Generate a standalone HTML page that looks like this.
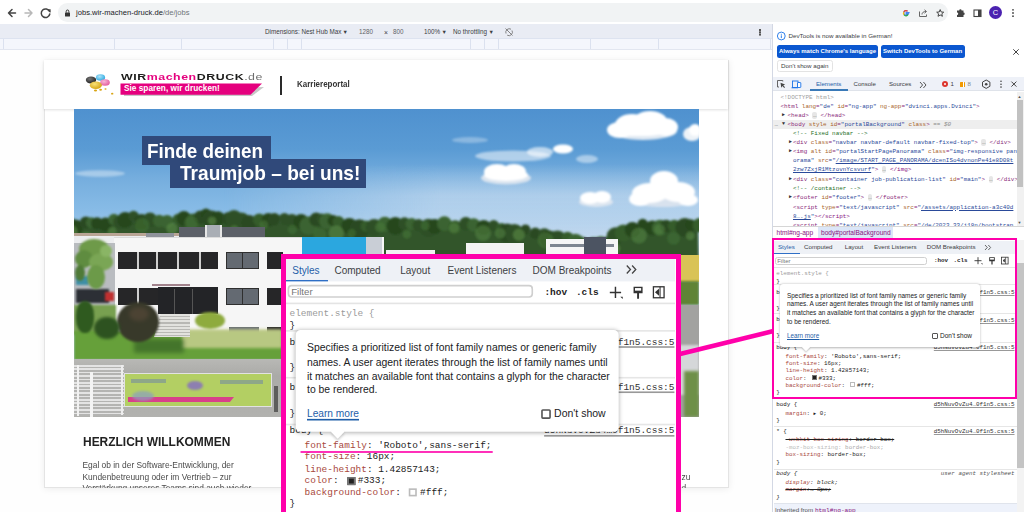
<!DOCTYPE html>
<html><head><meta charset="utf-8">
<style>
*{box-sizing:border-box;margin:0;padding:0}
html,body{width:1024px;height:512px;overflow:hidden;background:#fff;font-family:"Liberation Sans",sans-serif;position:relative}
.a{position:absolute}
.mono{font-family:"Liberation Mono",monospace}
.nw{white-space:nowrap}
#top{left:0;top:0;width:1024px;height:24px;background:#fff}
#pill{left:58px;top:3px;width:890px;height:18.5px;border-radius:9.25px;background:#f1f3f4}
#devtb{left:0;top:24px;width:772px;height:15px;background:#e9ecf4}
#ruler{left:0;top:38px;width:772px;height:12px;background:#f4f6fc;border-top:1px solid #dde3f0;border-bottom:1px solid #e2e6f0}
#ruler i{position:absolute;top:0;width:1px;height:10px;background:#dbe1ef}
#vp{left:0;top:50px;width:772px;height:462px;background:#fefefe}
#card{left:43.5px;top:59.5px;width:685px;height:428px;background:#fff;border:1px solid #e4e4e4;box-shadow:0 1px 7px rgba(0,0,0,.07);overflow:hidden}
#dt{left:772px;top:24px;width:252px;height:488px;background:#fff;border-left:1px solid #d3d8e4;overflow:hidden}
.sp{position:absolute;left:0;top:0;width:243px;height:282px;background:#fff}
.pn{color:#a8483c}
.dtxt{color:#3c4043;font-size:6.2px;line-height:8px}
</style></head>
<body>
<!-- ===== browser top bar ===== -->
<div id="top" class="a"></div>
<svg class="a" style="left:0;top:0" width="60" height="24" viewBox="0 0 60 24">
 <g fill="none" stroke-width="1.5" stroke-linecap="round" stroke-linejoin="round">
  <path d="M15.5 13H8.5M12 9.5L8.5 13L12 16.5" stroke="#444"/>
  <path d="M25 13H32M28.5 9.5L32 13L28.5 16.5" stroke="#b8b8b8"/>
  <path d="M49.5 11.5A4.3 4.3 0 1 0 49.8 14" stroke="#444"/>
 </g>
 <path d="M47 9.2L50.6 9.2L50.6 12.8Z" fill="#444"/>
</svg>
<div id="pill" class="a"></div>
<svg class="a" style="left:63px;top:8px" width="9" height="10" viewBox="0 0 9 10">
 <rect x="2" y="4.5" width="5" height="4" rx=".6" fill="#333"/>
 <path d="M3.2 4.6V3.3A1.3 1.3 0 0 1 5.8 3.3V4.6" fill="none" stroke="#333" stroke-width="1"/>
</svg>
<div class="a nw" style="left:76px;top:7.5px;font-size:7.6px;line-height:10px;color:#202124">jobs.wir-machen-druck.de<span style="color:#6f7378">/de/jobs</span></div>
<!-- right icons -->
<svg class="a" style="left:900px;top:6px" width="124" height="14" viewBox="0 0 124 14">
 <!-- G -->
 <path d="M9.6 6.6H6.2V8H8.1A2.3 2.3 0 1 1 7.5 5.2" fill="none" stroke="#4285f4" stroke-width="1.3"/>
 <path d="M7.5 5.2A2.3 2.3 0 0 0 3.9 6.1" fill="none" stroke="#ea4335" stroke-width="1.3"/>
 <path d="M3.9 6.1A2.3 2.3 0 0 0 4.1 8.9" fill="none" stroke="#fbbc05" stroke-width="1.3"/>
 <path d="M4.1 8.9A2.3 2.3 0 0 0 8.1 8.2" fill="none" stroke="#34a853" stroke-width="1.3"/>
 <!-- share -->
 <path d="M19.5 5.5V10.5H26.5V8.5M22 8.5C22 6.5 23.5 5.5 26 5.5M24.5 3.8L26.5 5.5L24.5 7.2" fill="none" stroke="#666" stroke-width="1"/>
 <!-- star -->
 <path d="M40.2 3.6L41.2 6L43.7 6.2L41.8 7.8L42.4 10.3L40.2 9L38 10.3L38.6 7.8L36.7 6.2L39.2 6Z" fill="none" stroke="#444" stroke-width="1" stroke-linejoin="round"/>
 <!-- puzzle -->
 <path d="M57 4.5H59.2A1.2 1.2 0 0 1 61.6 4.5H63.5V6.6A1.2 1.2 0 0 1 63.5 9V11H57V9A1.2 1.2 0 0 0 57 6.6Z" fill="#444"/>
 <!-- sidebar -->
 <rect x="74" y="4" width="7" height="6.5" fill="none" stroke="#444" stroke-width="1.1"/>
 <rect x="78" y="4" width="3" height="6.5" fill="#444"/>
 <!-- kebab -->
 <circle cx="113" cy="3.8" r=".9" fill="#444"/><circle cx="113" cy="7" r=".9" fill="#444"/><circle cx="113" cy="10.2" r=".9" fill="#444"/>
</svg>
<div class="a" style="left:989px;top:6px;width:13px;height:13px;border-radius:50%;background:#4b22b0;color:#fff;font-size:7.5px;line-height:13px;text-align:center">C</div>

<!-- ===== device toolbar ===== -->
<div id="devtb" class="a"></div>
<div class="a nw" style="left:265px;top:28px;font-size:6.3px;line-height:8px;color:#3c4043">Dimensions: Nest Hub Max<span style="font-size:5.5px;margin-left:1.2px">▼</span></div>
<div class="a nw" style="left:359px;top:28px;font-size:6.3px;line-height:8px;color:#5f6368">1280</div>
<div class="a nw" style="left:384px;top:28.5px;font-size:6.8px;line-height:8px;color:#3c4043">×</div>
<div class="a nw" style="left:393px;top:28px;font-size:6.3px;line-height:8px;color:#5f6368">800</div>
<div class="a nw" style="left:424px;top:28px;font-size:6.3px;line-height:8px;color:#3c4043">100%<span style="font-size:5.5px;margin-left:1.5px">▼</span></div>
<div class="a nw" style="left:453px;top:28px;font-size:6.3px;line-height:8px;color:#3c4043">No throttling<span style="font-size:5.5px;margin-left:1.5px">▼</span></div>
<svg class="a" style="left:504px;top:27px" width="10" height="10" viewBox="0 0 10 10"><path d="M2 6.5A3.5 3.5 0 0 1 7 2.2M8 3.5A3.5 3.5 0 0 1 3.2 8.2M1.5 1.5L8.5 8.5" fill="none" stroke="#777" stroke-width=".9"/></svg>
<div class="a" style="left:759px;top:29px;width:1.6px;height:1.6px;background:#555;box-shadow:0 2.3px 0 #555,0 4.6px 0 #555"></div>
<div id="ruler" class="a"><i style="left:2.5px"></i><i style="left:114px"></i><i style="left:181px"></i><i style="left:273px"></i><i style="left:287px"></i><i style="left:301px"></i><i style="left:470px"></i><i style="left:484px"></i><i style="left:498px"></i><i style="left:590px"></i><i style="left:658px"></i><i style="left:769.5px"></i></div>

<!-- ===== viewport ===== -->
<div id="vp" class="a"></div>
<div id="card" class="a"></div>
<!-- header -->
<div class="a" style="left:44px;top:60px;width:684px;height:48.5px;background:#fff;box-shadow:0 1px 2.5px rgba(0,0,0,.13)"></div>
<svg class="a" style="left:84px;top:72px" width="34" height="25" viewBox="0 0 34 25">
 <defs>
  <radialGradient id="gk" cx=".4" cy=".35" r=".7"><stop offset="0" stop-color="#777"/><stop offset="1" stop-color="#1e1e1e"/></radialGradient>
  <radialGradient id="gc" cx=".4" cy=".35" r=".7"><stop offset="0" stop-color="#aee4fa"/><stop offset="1" stop-color="#2aa8e0"/></radialGradient>
  <radialGradient id="gm" cx=".4" cy=".35" r=".7"><stop offset="0" stop-color="#f7b6d6"/><stop offset="1" stop-color="#e2579a"/></radialGradient>
  <radialGradient id="gy" cx=".4" cy=".35" r=".7"><stop offset="0" stop-color="#f8e27a"/><stop offset="1" stop-color="#d3a10c"/></radialGradient>
 </defs>
 <ellipse cx="16.5" cy="5.5" rx="4.6" ry="3.2" fill="url(#gc)"/>
 <ellipse cx="7" cy="8" rx="5.2" ry="3.4" fill="url(#gk)"/>
 <ellipse cx="21" cy="10.5" rx="4.8" ry="3.3" fill="url(#gm)"/>
 <ellipse cx="11.8" cy="13.2" rx="6" ry="3.8" fill="url(#gy)"/>
 <ellipse cx="11.5" cy="18.5" rx="1.6" ry="1.1" fill="#d9a515"/>
 <ellipse cx="16.6" cy="17.7" rx="1.4" ry="1" fill="#d9a515"/>
 <ellipse cx="21.5" cy="17" rx="1.1" ry=".8" fill="#d9a515"/>
 <ellipse cx="28.2" cy="21.7" rx="1.2" ry=".9" fill="#d9a515"/>
</svg>
<div class="a nw" style="left:120.5px;top:71.5px;font-size:9.9px;line-height:10px;font-weight:bold;letter-spacing:.45px;color:#1d1d1b;transform:scaleX(1.25);transform-origin:0 0">WIR<span style="color:#e5007e">machen</span>DRUCK<span style="color:#6e6e6e;font-weight:normal">.de</span></div>
<svg class="a" style="left:120px;top:82.5px" width="146" height="14" viewBox="0 0 146 14"><path d="M4 6L144 4L132 13L4 13Z" fill="#c8c8c8"/><path d="M0.5 .5H142L130.5 11.8H0.5Z" fill="#e5007e"/></svg>
<div class="a nw" style="left:124px;top:83.5px;font-size:8.2px;line-height:10px;font-weight:bold;color:#fff;letter-spacing:.05px">Sie sparen, wir drucken!</div>
<div class="a" style="left:280px;top:76px;width:1.6px;height:18.5px;background:#2a2a2a"></div>
<div class="a nw" style="left:297px;top:79px;font-size:9.2px;line-height:11px;font-weight:bold;color:#333;transform:scaleX(.867);transform-origin:0 0">Karriereportal</div>

<!-- hero photo -->
<div class="a" style="left:74px;top:109px;width:624.5px;height:308px;overflow:hidden;background:linear-gradient(180deg,rgb(79,145,207) 0px,rgb(90,155,212) 40px,rgb(118,174,222) 70px,rgb(135,187,230) 100px,rgb(150,195,233) 115px,rgb(180,206,234) 135px)">
 
 <div class="a" style="left:150px;top:55px;width:480px;height:95px;background:linear-gradient(180deg,rgba(205,222,240,0) 0%,rgba(205,222,240,.6) 33%,rgba(205,222,240,.65) 100%);-webkit-mask-image:linear-gradient(90deg,transparent,#000 45%)"></div>
 <!-- clouds -->
 <svg class="a" style="left:0;top:0" width="625" height="120" viewBox="0 0 625 120"><defs><filter id="cb" x="-20%" y="-40%" width="140%" height="180%"><feGaussianBlur stdDeviation="1.3"/></filter></defs><g filter="url(#cb)"><ellipse cx="569.0" cy="22.0" rx="34.0" ry="9.0" fill="#dfe8f2" opacity="1.00"/><ellipse cx="558.0" cy="16.0" rx="17.0" ry="11.0" fill="#fff" opacity="1.00"/><ellipse cx="576.0" cy="12.0" rx="17.0" ry="10.0" fill="#fff" opacity="1.00"/><ellipse cx="592.0" cy="18.0" rx="12.0" ry="9.0" fill="#fff" opacity="1.00"/><ellipse cx="546.0" cy="21.0" rx="13.0" ry="8.0" fill="#fff" opacity="1.00"/><ellipse cx="569.0" cy="19.0" rx="30.0" ry="8.0" fill="#fff" opacity="1.00"/><ellipse cx="618.0" cy="25.0" rx="9.0" ry="7.0" fill="#eef3f8" opacity="1.00"/><ellipse cx="621.0" cy="21.0" rx="6.0" ry="6.0" fill="#fff" opacity="1.00"/><ellipse cx="439.0" cy="47.0" rx="38.0" ry="5.5" fill="#f4f7fb" opacity="0.55"/><ellipse cx="466.0" cy="43.0" rx="13.0" ry="5.0" fill="#fff" opacity="0.60"/><ellipse cx="489.0" cy="40.0" rx="10.0" ry="4.5" fill="#fff" opacity="1.00"/><ellipse cx="432.0" cy="69.0" rx="25.0" ry="6.5" fill="#dae4ef" opacity="1.00"/><ellipse cx="423.0" cy="63.0" rx="13.0" ry="8.0" fill="#fff" opacity="1.00"/><ellipse cx="440.0" cy="63.0" rx="12.0" ry="8.0" fill="#fff" opacity="1.00"/><ellipse cx="432.0" cy="66.0" rx="22.0" ry="6.0" fill="#fff" opacity="1.00"/><ellipse cx="589.0" cy="90.0" rx="33.0" ry="8.0" fill="#d8e2ee" opacity="1.00"/><ellipse cx="590.0" cy="72.0" rx="14.0" ry="10.0" fill="#fff" opacity="1.00"/><ellipse cx="576.0" cy="84.0" rx="18.0" ry="10.0" fill="#fff" opacity="1.00"/><ellipse cx="604.0" cy="83.0" rx="17.0" ry="10.0" fill="#fff" opacity="1.00"/><ellipse cx="566.0" cy="90.0" rx="11.0" ry="7.0" fill="#fff" opacity="1.00"/><ellipse cx="614.0" cy="91.0" rx="10.0" ry="6.0" fill="#fff" opacity="1.00"/><ellipse cx="522.0" cy="93.0" rx="17.0" ry="5.0" fill="#dde6f0" opacity="1.00"/><ellipse cx="516.0" cy="89.0" rx="10.0" ry="6.0" fill="#fff" opacity="1.00"/><ellipse cx="528.0" cy="88.0" rx="9.0" ry="6.0" fill="#fff" opacity="1.00"/><ellipse cx="513.0" cy="50.0" rx="11.0" ry="4.0" fill="#fff" opacity="0.45"/><ellipse cx="26.0" cy="64.5" rx="25.0" ry="3.2" fill="#fff" opacity="0.38"/><ellipse cx="396.0" cy="31.0" rx="18.0" ry="3.0" fill="#fff" opacity="0.30"/></g></svg>
 
 <!-- tree line -->
<svg class="a" style="left:0;top:0" width="625" height="160" viewBox="0 0 625 160"><defs><filter id="bl" x="-5%" y="-20%" width="110%" height="140%"><feGaussianBlur stdDeviation="1"/></filter></defs><g filter="url(#bl)"><polygon points="0.0,120.0 12.0,118.0 36.0,114.0 66.0,112.0 96.0,115.0 134.0,109.0 166.0,112.0 196.0,114.0 226.0,113.0 257.0,115.0 286.0,119.0 309.0,118.0 346.0,117.0 405.0,118.0 426.0,121.0 456.0,124.0 476.0,129.0 501.0,134.0 531.0,136.0 548.0,124.0 566.0,120.0 596.0,119.0 624.0,119.0 625,160 0,160" fill="#30552a"/><circle cx="-4.0" cy="115.4" r="6.6" fill="#28461f"/><circle cx="1.4" cy="118.3" r="7.7" fill="#28461f"/><circle cx="11.9" cy="113.5" r="6.1" fill="#2b4a23"/><circle cx="17.3" cy="113.7" r="5.5" fill="#3a6430"/><circle cx="23.1" cy="114.4" r="6.1" fill="#28461f"/><circle cx="31.5" cy="115.6" r="7.0" fill="#28461f"/><circle cx="39.9" cy="110.5" r="5.7" fill="#3a6430"/><circle cx="45.6" cy="113.0" r="6.5" fill="#2e5027"/><circle cx="51.2" cy="110.8" r="7.9" fill="#28461f"/><circle cx="59.5" cy="107.0" r="5.3" fill="#2e5027"/><circle cx="67.4" cy="112.7" r="7.7" fill="#2b4a23"/><circle cx="76.0" cy="110.8" r="7.3" fill="#2e5027"/><circle cx="85.2" cy="112.0" r="6.2" fill="#3a6430"/><circle cx="93.1" cy="112.7" r="6.7" fill="#3a6430"/><circle cx="104.0" cy="110.4" r="5.6" fill="#355c2c"/><circle cx="109.9" cy="109.4" r="7.4" fill="#28461f"/><circle cx="119.5" cy="112.5" r="7.9" fill="#355c2c"/><circle cx="126.5" cy="108.4" r="6.8" fill="#2b4a23"/><circle cx="132.0" cy="105.1" r="5.5" fill="#28461f"/><circle cx="137.3" cy="110.1" r="8.5" fill="#2b4a23"/><circle cx="144.0" cy="109.2" r="6.9" fill="#28461f"/><circle cx="154.7" cy="109.8" r="6.8" fill="#2b4a23"/><circle cx="160.0" cy="109.9" r="8.8" fill="#2e5027"/><circle cx="167.4" cy="113.2" r="9.6" fill="#2e5027"/><circle cx="175.1" cy="113.8" r="7.7" fill="#2b4a23"/><circle cx="185.3" cy="110.8" r="6.4" fill="#355c2c"/><circle cx="194.4" cy="110.9" r="6.9" fill="#28461f"/><circle cx="200.4" cy="110.2" r="6.2" fill="#2b4a23"/><circle cx="210.4" cy="109.8" r="5.9" fill="#2e5027"/><circle cx="217.9" cy="111.9" r="6.8" fill="#2e5027"/><circle cx="227.1" cy="112.7" r="7.6" fill="#28461f"/><circle cx="234.8" cy="116.7" r="9.4" fill="#3a6430"/><circle cx="242.2" cy="110.6" r="7.0" fill="#2b4a23"/><circle cx="247.6" cy="109.8" r="5.3" fill="#2e5027"/><circle cx="253.2" cy="112.3" r="8.0" fill="#3a6430"/><circle cx="259.1" cy="111.6" r="5.5" fill="#28461f"/><circle cx="264.5" cy="113.0" r="6.0" fill="#355c2c"/><circle cx="275.3" cy="116.9" r="8.0" fill="#28461f"/><circle cx="285.4" cy="120.2" r="10.0" fill="#2b4a23"/><circle cx="292.2" cy="117.2" r="5.7" fill="#355c2c"/><circle cx="300.1" cy="118.4" r="8.5" fill="#2e5027"/><circle cx="310.8" cy="115.3" r="7.6" fill="#3a6430"/><circle cx="321.3" cy="116.9" r="8.8" fill="#28461f"/><circle cx="330.5" cy="114.6" r="6.3" fill="#2e5027"/><circle cx="337.6" cy="115.0" r="6.1" fill="#3a6430"/><circle cx="344.6" cy="116.2" r="6.1" fill="#2e5027"/><circle cx="354.4" cy="118.9" r="9.1" fill="#2e5027"/><circle cx="360.6" cy="117.4" r="7.5" fill="#28461f"/><circle cx="370.4" cy="114.7" r="7.4" fill="#3a6430"/><circle cx="381.1" cy="118.5" r="7.2" fill="#355c2c"/><circle cx="391.8" cy="114.7" r="6.8" fill="#2e5027"/><circle cx="399.7" cy="116.0" r="6.7" fill="#3a6430"/><circle cx="409.7" cy="118.3" r="7.4" fill="#28461f"/><circle cx="419.7" cy="116.6" r="5.6" fill="#2e5027"/><circle cx="427.6" cy="120.0" r="5.9" fill="#355c2c"/><circle cx="433.1" cy="124.1" r="9.7" fill="#2b4a23"/><circle cx="440.5" cy="124.8" r="9.7" fill="#2e5027"/><circle cx="451.5" cy="120.6" r="5.1" fill="#2b4a23"/><circle cx="461.3" cy="124.2" r="5.7" fill="#2b4a23"/><circle cx="470.3" cy="126.1" r="6.8" fill="#2e5027"/><circle cx="475.4" cy="130.5" r="9.0" fill="#28461f"/><circle cx="483.5" cy="131.3" r="9.7" fill="#2e5027"/><circle cx="493.5" cy="128.8" r="6.1" fill="#355c2c"/><circle cx="501.5" cy="133.5" r="8.8" fill="#3a6430"/><circle cx="509.0" cy="133.7" r="5.7" fill="#355c2c"/><circle cx="519.4" cy="136.6" r="8.3" fill="#3a6430"/><circle cx="526.9" cy="136.8" r="9.6" fill="#3a6430"/><circle cx="532.8" cy="135.6" r="7.6" fill="#2e5027"/><circle cx="541.5" cy="127.2" r="8.9" fill="#2e5027"/><circle cx="549.3" cy="124.1" r="8.6" fill="#355c2c"/><circle cx="558.4" cy="120.7" r="7.7" fill="#28461f"/><circle cx="568.7" cy="115.1" r="5.3" fill="#28461f"/><circle cx="578.4" cy="118.9" r="7.5" fill="#28461f"/><circle cx="586.0" cy="118.9" r="8.1" fill="#3a6430"/><circle cx="592.2" cy="117.1" r="6.4" fill="#2b4a23"/><circle cx="600.3" cy="116.9" r="6.2" fill="#355c2c"/><circle cx="610.8" cy="118.5" r="9.5" fill="#2b4a23"/><circle cx="616.6" cy="115.8" r="5.6" fill="#28461f"/><circle cx="625.6" cy="116.2" r="7.1" fill="#355c2c"/><circle cx="-4.0" cy="123.1" r="7.6" fill="#5f9048" opacity=".55"/><circle cx="12.3" cy="130.2" r="7.5" fill="#558644" opacity=".55"/><circle cx="38.2" cy="122.1" r="4.4" fill="#558644" opacity=".55"/><circle cx="68.1" cy="116.2" r="7.3" fill="#447234" opacity=".55"/><circle cx="98.0" cy="119.5" r="5.6" fill="#5f9048" opacity=".55"/><circle cx="117.1" cy="113.8" r="6.9" fill="#447234" opacity=".55"/><circle cx="138.1" cy="111.8" r="4.1" fill="#5f9048" opacity=".55"/><circle cx="160.3" cy="120.6" r="4.3" fill="#558644" opacity=".55"/><circle cx="189.9" cy="115.7" r="4.4" fill="#4a7a38" opacity=".55"/><circle cx="218.4" cy="120.5" r="4.7" fill="#447234" opacity=".55"/><circle cx="246.0" cy="125.5" r="6.7" fill="#447234" opacity=".55"/><circle cx="262.3" cy="124.1" r="7.7" fill="#5f9048" opacity=".55"/><circle cx="277.8" cy="124.0" r="4.2" fill="#447234" opacity=".55"/><circle cx="306.1" cy="118.4" r="5.1" fill="#4a7a38" opacity=".55"/><circle cx="332.9" cy="125.3" r="4.3" fill="#4a7a38" opacity=".55"/><circle cx="351.2" cy="116.7" r="4.5" fill="#447234" opacity=".55"/><circle cx="380.0" cy="118.9" r="5.1" fill="#558644" opacity=".55"/><circle cx="409.0" cy="124.1" r="7.9" fill="#558644" opacity=".55"/><circle cx="426.2" cy="124.3" r="5.2" fill="#558644" opacity=".55"/><circle cx="444.9" cy="125.7" r="6.0" fill="#5f9048" opacity=".55"/><circle cx="471.7" cy="131.3" r="8.0" fill="#4a7a38" opacity=".55"/><circle cx="497.4" cy="136.4" r="6.2" fill="#447234" opacity=".55"/><circle cx="515.4" cy="142.3" r="5.8" fill="#447234" opacity=".55"/><circle cx="539.9" cy="139.8" r="6.2" fill="#5f9048" opacity=".55"/><circle cx="564.9" cy="126.6" r="7.9" fill="#558644" opacity=".55"/><circle cx="585.4" cy="120.3" r="5.4" fill="#558644" opacity=".55"/><circle cx="599.6" cy="129.3" r="6.5" fill="#447234" opacity=".55"/><circle cx="616.2" cy="126.8" r="4.3" fill="#5f9048" opacity=".55"/></g></svg>
 <!-- buildings top -->
 <div class="a" style="left:0;top:124px;width:111px;height:12px;background:#ecedef"></div>
 <div class="a" style="left:0;top:123.5px;width:111px;height:3px;background:#b9a595"></div>
 <div class="a" style="left:72px;top:124px;width:28px;height:10px;background:#8f939b"></div>
 <div class="a" style="left:104.5px;top:117.5px;width:86px;height:11px;background:#5c6068"></div>
 <div class="a" style="left:131px;top:116px;width:17px;height:12.5px;background:#a9aeb5;border-left:2px solid #e6e6e6;border-right:2px solid #e6e6e6"></div>
 <!-- main white building -->
 <div class="a" style="left:40px;top:127.5px;width:270px;height:96.5px;background:#f6f6f6"></div>
 <div class="a" style="left:228px;top:128px;width:64px;height:17px;background:#2ba7df"></div>
 <div class="a" style="left:292px;top:128px;width:16px;height:17px;background:#c9ced6"></div>
 <div class="a" style="left:40px;top:127.5px;width:188px;height:1.5px;background:#dcdcdc"></div>
 <div class="a" style="left:44px;top:142.6px;width:100px;height:17.2px;background:#262628"></div>
 <div class="a" style="left:62.6px;top:142.6px;width:2.2px;height:17.2px;background:#cfcfcf"></div>
 <div class="a" style="left:82px;top:142.6px;width:2.2px;height:17.2px;background:#cfcfcf"></div>
 <div class="a" style="left:102.6px;top:142.6px;width:2.2px;height:17.2px;background:#cfcfcf"></div>
 <div class="a" style="left:125px;top:142.6px;width:2.2px;height:17.2px;background:#cfcfcf"></div>
 <div class="a" style="left:151.6px;top:142.6px;width:33.4px;height:17.2px;background:#646a72;border:1.6px solid #2f2f2f"></div>
 <div class="a" style="left:167.5px;top:142.6px;width:1.5px;height:17.2px;background:#2f2f2f"></div>
 <div class="a" style="left:192.8px;top:142.6px;width:16px;height:17.2px;background:#262628"></div>
 <div class="a" style="left:44px;top:179px;width:40px;height:17.3px;background:#262628"></div>
 <div class="a" style="left:62.6px;top:179px;width:2.2px;height:17.3px;background:#cfcfcf"></div>
 <div class="a" style="left:84px;top:178px;width:60.3px;height:27px;background:#232427"></div>
 <div class="a" style="left:100px;top:180px;width:1.3px;height:25px;background:#555"></div><div class="a" style="left:118px;top:180px;width:1.3px;height:25px;background:#555"></div>
 <div class="a" style="left:151.6px;top:179px;width:33.4px;height:17.3px;background:#646a72;border:1.6px solid #2f2f2f"></div>
 <div class="a" style="left:167.5px;top:179px;width:1.5px;height:17.3px;background:#2f2f2f"></div>
 <div class="a" style="left:192.8px;top:179px;width:16px;height:17.3px;background:#262628"></div>
 <div class="a" style="left:155px;top:217.8px;width:30px;height:6.2px;background:#646a72"></div>
 <div class="a" style="left:192.8px;top:217.8px;width:16px;height:6.2px;background:#262628"></div>
 <div class="a" style="left:77.6px;top:174.8px;width:38px;height:2.5px;background:#6a3848;opacity:.6"></div>
 <!-- right buildings -->
 <div class="a" style="left:311.7px;top:141px;width:49.3px;height:5px;background:#f2f2f2"></div>
 <div class="a" style="left:391.5px;top:134px;width:58px;height:12px;background:#f3f3f3"></div>
 <div class="a" style="left:472px;top:130px;width:72px;height:16px;background:#f5f5f5"></div>
 <div class="a" style="left:476px;top:134.5px;width:64px;height:3px;background:#7d8590"></div>
 <div class="a" style="left:510px;top:128px;width:21.7px;height:18px;background:#4c5462"></div>
 <!-- left parking -->
 <div class="a" style="left:0;top:134px;width:41px;height:90px;background:#b9bcc0"></div>
 <div class="a" style="left:3px;top:150px;width:30px;height:8px;background:#d4d6d8;filter:blur(1px)"></div>
 <div class="a" style="left:2px;top:167px;width:13px;height:9px;background:#3f8fa6;filter:blur(1px)"></div>
 <div class="a" style="left:2px;top:180px;width:33px;height:14px;background:#2c2f35;filter:blur(1.1px)"></div>
 <div class="a" style="left:31px;top:183px;width:9px;height:9px;background:#c03030;filter:blur(.8px)"></div>
 <svg class="a" style="left:0;top:120px" width="42" height="80" viewBox="0 0 42 80"><defs><filter id="tb2"><feGaussianBlur stdDeviation="1.1"/></filter></defs><g filter="url(#tb2)">
  <ellipse cx="20" cy="20" rx="15" ry="10" fill="#6e9a4a"/><ellipse cx="10" cy="30" rx="9" ry="9" fill="#5f8c40"/><ellipse cx="27" cy="33" rx="12" ry="9" fill="#7aa655"/>
  <ellipse cx="22" cy="48" rx="9" ry="12" fill="#6c9a48"/><ellipse cx="32" cy="22" rx="6" ry="6" fill="#8ab565"/><ellipse cx="6" cy="44" rx="5" ry="8" fill="#4f7a38"/>
 </g></svg>
 <div class="a" style="left:0;top:196px;width:42px;height:30px;background:#78a050;filter:blur(1px)"></div>
 <!-- grass, bushes -->
 <div class="a" style="left:0;top:222px;width:210px;height:29px;background:#66a03a;filter:blur(.8px)"></div>
 <div class="a" style="left:108px;top:220px;width:100px;height:19px;background:#c7cf8f;filter:blur(1.5px);opacity:.85"></div>
 <div class="a" style="left:60px;top:230px;width:50px;height:14px;background:#2f5a22;filter:blur(2px);opacity:.6"></div>
 <div class="a" style="left:80px;top:205px;width:36px;height:23px;background:repeating-linear-gradient(180deg,#e2e2de 0 2px,#b8b8b4 2px 3.2px);clip-path:polygon(18% 0,100% 0,100% 100%,0 100%)"></div>
 <div class="a" style="left:2px;top:192px;width:18px;height:32px;border-radius:45%;background:#2f5a1f;filter:blur(1px)"></div>
 <div class="a" style="left:43px;top:193px;width:42px;height:40px;border-radius:50%;background:#38392a;filter:blur(1.2px)"></div><div class="a" style="left:55px;top:198px;width:20px;height:14px;border-radius:50%;background:#5a4a3a;filter:blur(2px);opacity:.6"></div>
 <div class="a" style="left:121px;top:203px;width:30px;height:17px;border-radius:50%;background:#8eab3e;filter:blur(1px)"></div>
 <div class="a" style="left:20px;top:208px;width:26px;height:22px;border-radius:50%;background:#2d5220;filter:blur(1.5px)"></div>
 <!-- road, fence, banner -->
 <div class="a" style="left:0;top:250px;width:210px;height:58px;background:linear-gradient(180deg,#b8b8b5,#aaaaa7 30%,#b2b2af)"></div>
 <div class="a" style="left:0;top:255.5px;width:50px;height:51px;background:repeating-linear-gradient(180deg,#e6e6e6 0 1.6px,#b4b4b2 1.6px 3.4px);opacity:.95"></div>
 <div class="a" style="left:3px;top:255.5px;width:1.8px;height:51px;background:#f2f2f2"></div>
 <div class="a" style="left:16px;top:263px;width:2.6px;height:45px;background:#f4f4f4"></div>
 <div class="a" style="left:47px;top:256px;width:2.2px;height:50px;background:#ededed"></div>
 <div class="a" style="left:50px;top:264px;width:147.5px;height:33.5px;background:#b3cf63;border:1px solid #e2e2e2"></div>
 <div class="a" style="left:53.7px;top:288px;width:106.3px;height:5.3px;background:#d8408a;clip-path:polygon(0 0,100% 0,96% 100%,0 100%)"></div>
 <div class="a" style="left:57px;top:270px;width:35px;height:4.4px;background:#6f86a8;opacity:.55"></div>
 <div class="a" style="left:146px;top:271px;width:43px;height:4.4px;background:#6f86a8;opacity:.55"></div>
 <div class="a" style="left:113px;top:272px;width:16px;height:9px;border-radius:50%;background:#8d7fb0;filter:blur(1px)"></div>
 <div class="a" style="left:58px;top:282px;width:22px;height:10px;border-radius:50%;background:#8aa0c0;filter:blur(1px);opacity:.7"></div>
 <div class="a" style="left:200px;top:277px;width:4px;height:26px;background:#3a3a3a;opacity:.7"></div>
 <!-- right strip -->
 <div class="a" style="left:600px;top:146px;width:25px;height:27px;background:#d9c356"></div>
 <div class="a" style="left:600px;top:172px;width:25px;height:24px;background:#5f8436;filter:blur(1px)"></div>
 <div class="a" style="left:600px;top:196px;width:25px;height:112px;background:#a2a2a0"></div>
 <div class="a" style="left:604px;top:236px;width:21px;height:50px;background:#d5d7d9;filter:blur(1px)"></div>
 <div class="a" style="left:610px;top:262px;width:15px;height:46px;background:#6e9048;filter:blur(1.5px)"></div>
 <!-- headline -->
 <div class="a" style="left:67.5px;top:27px;width:129.5px;height:28.5px;background:#30497a"></div>
 <div class="a" style="left:96px;top:50px;width:195.5px;height:28.7px;background:#30497a"></div>
 <div class="a nw" style="left:73px;top:30px;font-size:20.8px;line-height:24px;font-weight:bold;color:#fff;transform:scaleX(.905);transform-origin:0 0">Finde deinen</div>
 <div class="a nw" style="left:105.5px;top:52px;font-size:20.8px;line-height:24px;font-weight:bold;color:#fff;transform:scaleX(.918);transform-origin:0 0">Traumjob – bei uns!</div>
</div>
<!-- welcome text -->
<div class="a nw" style="left:82.5px;top:434px;font-size:13.5px;line-height:15px;font-weight:bold;color:#222;transform:scaleX(.885);transform-origin:0 0">HERZLICH WILLKOMMEN</div>
<div class="a" style="left:44px;top:450px;width:240px;height:37.5px;overflow:hidden">
 <div class="a nw" style="left:38.5px;top:10px;font-size:8.4px;line-height:11.6px;color:#4a4a4a">Egal ob in der Software-Entwicklung, der<br>Kundenbetreuung oder im Vertrieb – zur<br>Verstärkung unseres Teams sind auch wieder</div>
</div>
<div class="a" style="left:670px;top:450px;width:40px;height:37.5px;overflow:hidden">
 <div class="a nw" style="left:11.5px;top:10px;font-size:8.4px;line-height:11.6px;color:#4a4a4a">&nbsp;<br>zu<br>d</div>
</div>

<!-- ===== devtools ===== -->
<div id="dt" class="a"></div>
<svg class="a" style="left:776px;top:31px" width="11" height="11" viewBox="0 0 11 11"><circle cx="5.3" cy="5" r="3.9" fill="none" stroke="#1a73e8" stroke-width=".9"/><rect x="4.85" y="4.3" width=".9" height="2.8" fill="#1a73e8"/><rect x="4.85" y="2.8" width=".9" height=".9" fill="#1a73e8"/></svg>
<div class="a nw" style="left:788.5px;top:32px;font-size:6.24px;line-height:8px;color:#3c4043">DevTools is now available in German!</div>
<div class="a nw" style="left:777px;top:45px;width:101px;height:12.5px;background:#0b57d0;border-radius:2.5px;color:#fff;font-weight:bold;font-size:6px;line-height:12.5px;text-align:center">Always match Chrome's language</div>
<div class="a nw" style="left:880.5px;top:45px;width:84px;height:12.5px;background:#0b57d0;border-radius:2.5px;color:#fff;font-weight:bold;font-size:6px;line-height:12.5px;text-align:center">Switch DevTools to German</div>
<div class="a nw" style="left:777px;top:60.3px;width:55.5px;height:12px;background:#fff;border:.8px solid #e3e3e3;border-radius:2.5px;color:#3c4043;font-size:6.2px;line-height:10.5px;text-align:center">Don't show again</div>
<svg class="a" style="left:1012px;top:48px" width="8" height="8" viewBox="0 0 8 8"><path d="M1.3 1.3L6.7 6.7M6.7 1.3L1.3 6.7" stroke="#444" stroke-width="1"/></svg>
<!-- devtools toolbar -->
<div class="a" style="left:773px;top:77px;width:251px;height:14px;background:#eef1f8;border-bottom:.8px solid #dfe3ea"></div>
<svg class="a" style="left:776px;top:79px" width="30" height="11" viewBox="0 0 30 11"><path d="M6.8 2.5V1.5H1.5V8H3" fill="none" stroke="#555" stroke-width=".9"/><path d="M4.5 3.8L9.2 5.6L7.3 6.3L9 8.3L8.2 9L6.5 7L5.3 8.7Z" fill="#444"/><rect x="16.5" y="2" width="5.5" height="6.5" fill="none" stroke="#1a73e8" stroke-width=".9"/><rect x="21.5" y="3.5" width="3.3" height="5" rx=".5" fill="#fff" stroke="#1a73e8" stroke-width=".9"/><path d="M15.5 8.8H22" stroke="#1a73e8" stroke-width=".9"/></svg>
<div class="a nw" style="left:816px;top:80px;font-size:6.1px;line-height:8px;color:#1f5ea8">Elements</div>
<div class="a" style="left:810px;top:89.4px;width:37.5px;height:1.6px;background:#3a7ab8"></div>
<div class="a nw" style="left:853.5px;top:80px;font-size:6.1px;line-height:8px;color:#3c4043">Console</div>
<div class="a nw" style="left:889px;top:80px;font-size:6.1px;line-height:8px;color:#3c4043">Sources</div>
<svg class="a" style="left:918.5px;top:80.5px" width="9" height="8" viewBox="0 0 9 8"><path d="M1 1L3.6 4L1 7M4.4 1L7 4L4.4 7" fill="none" stroke="#444" stroke-width=".9"/></svg>
<div class="a" style="left:941.8px;top:81.3px;width:6px;height:6px;border-radius:50%;background:#dc362e"></div>
<div class="a" style="left:943.6px;top:83.1px;width:2.4px;height:2.4px;border-radius:50%;background:#fff"></div>
<div class="a nw" style="left:950.5px;top:80px;font-size:6.1px;line-height:8px;color:#3c4043">1</div>
<div class="a" style="left:960px;top:82px;width:5.4px;height:4.6px;background:#f29900;border-radius:.6px"></div>
<div class="a" style="left:962.5px;top:82px;width:.5px;height:4.6px;background:#fff"></div>
<div class="a nw" style="left:967.5px;top:80px;font-size:6.1px;line-height:8px;color:#80868b">8</div>
<svg class="a" style="left:981px;top:79px" width="40" height="11" viewBox="0 0 40 11"><path d="M5.2 1L8.9 3.1V7.3L5.2 9.4L1.5 7.3V3.1Z" fill="none" stroke="#444" stroke-width="1"/><circle cx="5.2" cy="5.2" r="1.3" fill="#444"/><circle cx="20" cy="2.3" r=".8" fill="#444"/><circle cx="20" cy="5.2" r=".8" fill="#444"/><circle cx="20" cy="8.1" r=".8" fill="#444"/><path d="M30.4 2.6L35.4 7.6M35.4 2.6L30.4 7.6" stroke="#444" stroke-width="1"/></svg>
<!-- elements tree -->
<div class="a" style="left:773px;top:120.3px;width:244px;height:8.4px;background:#eeeeee"></div>
<div class="a mono nw" style="left:773px;top:92.7px;font-size:5.93px;line-height:9.1px;color:#8a2a7a">
<div style="padding-left:7.5px;color:#a0a0a0">&lt;!DOCTYPE html&gt;</div>
<div style="padding-left:7.5px">&lt;html <span style="color:#a8642a">lang</span>=<span style="color:#2a4a9a">"de"</span> <span style="color:#a8642a">id</span>=<span style="color:#2a4a9a">"ng-app"</span> <span style="color:#a8642a">ng-app</span>=<span style="color:#2a4a9a">"dvinci.apps.Dvinci"</span>&gt;</div>
<div style="padding-left:10px;position:relative"><span style="position:absolute;left:9px;top:0;color:#333;font-size:5px">▶</span><span style="padding-left:4.5px">&lt;head&gt; <span style="background:#e6e6e6;color:#666;border-radius:2px;padding:0 .5px">…</span> &lt;/head&gt;</span></div>
<div style="padding-left:10px;position:relative"><span style="position:absolute;left:1.5px;top:0;color:#444">…</span><span style="position:absolute;left:9px;top:0;color:#333;font-size:5px">▼</span><span style="padding-left:4.5px">&lt;body <span style="color:#a8642a">style</span> <span style="color:#a8642a">id</span>=<span style="color:#2a4a9a">"portalBackground"</span> <span style="color:#a8642a">class</span>&gt; <span style="color:#888;font-style:italic">== $0</span></span></div>
<div style="padding-left:20px;color:#236e25">&lt;!-- Fixed navbar --&gt;</div>
<div style="padding-left:20px;position:relative"><span style="position:absolute;left:16px;top:0;color:#333;font-size:5px">▶</span>&lt;div <span style="color:#a8642a">class</span>=<span style="color:#2a4a9a">"navbar navbar-default navbar-fixed-top"</span>&gt; <span style="background:#e6e6e6;color:#666;border-radius:2px;padding:0 .5px">…</span> &lt;/div&gt;</div>
<div style="padding-left:20px;position:relative"><span style="position:absolute;left:16px;top:0;color:#333;font-size:5px">▶</span>&lt;img <span style="color:#a8642a">alt</span> <span style="color:#a8642a">id</span>=<span style="color:#2a4a9a">"portalStartPagePanorama"</span> <span style="color:#a8642a">class</span>=<span style="color:#2a4a9a">"img-responsive pan</span></div>
<div style="padding-left:20px;color:#2a4a9a">orama" <span style="color:#a8642a">src</span>=<span style="color:#2a4a9a">"<u>/image/START_PAGE_PANORAMA/dcenISo4dvnonPe41e8D08t</u></span></div>
<div style="padding-left:20px;color:#2a4a9a"><u>2zw7ZxjR1MtzovnYcsvurf</u>"<span style="color:#881280">&gt; <span style="background:#e6e6e6;color:#666;border-radius:2px;padding:0 .5px">…</span> &lt;/img&gt;</span></div>
<div style="padding-left:20px;position:relative"><span style="position:absolute;left:16px;top:0;color:#333;font-size:5px">▶</span>&lt;div <span style="color:#a8642a">class</span>=<span style="color:#2a4a9a">"container job-publication-list"</span> <span style="color:#a8642a">id</span>=<span style="color:#2a4a9a">"main"</span>&gt; <span style="background:#e6e6e6;color:#666;border-radius:2px;padding:0 .5px">…</span> &lt;/div&gt;</div>
<div style="padding-left:20px;color:#236e25">&lt;!-- /container --&gt;</div>
<div style="padding-left:20px;position:relative"><span style="position:absolute;left:16px;top:0;color:#333;font-size:5px">▶</span>&lt;footer <span style="color:#a8642a">id</span>=<span style="color:#2a4a9a">"footer"</span>&gt; <span style="background:#e6e6e6;color:#666;border-radius:2px;padding:0 .5px">…</span> &lt;/footer&gt;</div>
<div style="padding-left:20px;margin-top:.9px">&lt;script <span style="color:#a8642a">type</span>=<span style="color:#2a4a9a">"text/javascript"</span> <span style="color:#a8642a">src</span>=<span style="color:#2a4a9a">"<u>/assets/application-a3c40d</u></span></div>
<div style="padding-left:20px;color:#2a4a9a"><u>8….js</u>"<span style="color:#881280">&gt;&lt;/script&gt;</span></div>
<div style="padding-left:20px">&lt;script <span style="color:#a8642a">type</span>=<span style="color:#2a4a9a">"text/javascript"</span> <span style="color:#a8642a">src</span>=<span style="color:#2a4a9a">"<u>/de/2023.33/i18n/bootstrap</u></span></div>
</div>
<!-- scrollbar -->
<div class="a" style="left:1016.5px;top:92px;width:7.5px;height:134px;background:#f1f1f1"></div>
<div class="a" style="left:1017.3px;top:100px;width:6px;height:87px;background:#c1c1c1"></div>
<div class="a nw" style="left:1017.6px;top:93.5px;font-size:4px;line-height:5px;color:#505050">▲</div>
<div class="a nw" style="left:1017.6px;top:219.5px;font-size:4px;line-height:5px;color:#505050">▼</div>
<!-- breadcrumbs -->
<div class="a" style="left:773px;top:226px;width:251px;height:12px;background:#fff;border-top:.8px solid #d6d6d6"></div>
<div class="a" style="left:818px;top:226.8px;width:75px;height:11px;background:#dbe6f8"></div>
<div class="a nw" style="left:776.5px;top:228.5px;font-size:6.6px;line-height:8px;color:#881280">html#ng-app</div>
<div class="a nw" style="left:821px;top:228.5px;font-size:6.6px;line-height:8px;color:#881280">body#portalBackground</div>
<div class="a" style="left:774px;top:240.5px;width:243px;height:272px;overflow:hidden"><div class="sp">
 <div class="a" style="left:0;top:0;width:243px;height:13.7px;background:#eef1f6"></div>
 <div class="a" style="left:0;top:12.5px;width:25.5px;height:1.3px;background:#2f6fc6"></div>
 <div class="a nw" style="left:3.9px;top:2.6px;font-size:6.2px;line-height:8px;color:#1f5ea8">Styles</div>
 <div class="a nw" style="left:30px;top:2.6px;font-size:6.2px;line-height:8px;color:#3c4043">Computed</div>
 <div class="a nw" style="left:70.7px;top:2.6px;font-size:6.2px;line-height:8px;color:#3c4043">Layout</div>
 <div class="a nw" style="left:100px;top:2.6px;font-size:6.2px;line-height:8px;color:#3c4043">Event Listeners</div>
 <div class="a nw" style="left:152.7px;top:2.6px;font-size:6.2px;line-height:8px;color:#3c4043">DOM Breakpoints</div>
 <svg class="a" style="left:210px;top:3px" width="8" height="7" viewBox="0 0 8 7"><path d="M1 1L3.3 3.5L1 6M4.3 1L6.6 3.5L4.3 6" fill="none" stroke="#444" stroke-width=".8"/></svg>
 <div class="a" style="left:0;top:13.7px;width:243px;height:14px;background:#fff;border-bottom:.7px solid #e4e4e4"></div>
 <div class="a" style="left:1px;top:16px;width:152px;height:8.4px;background:#fff;border:.7px solid #cfcfcf;border-radius:2.5px"></div>
 <div class="a nw" style="left:3.2px;top:16.2px;font-size:6px;line-height:8px;color:#777">Filter</div>
 <div class="a nw mono" style="left:160px;top:16.5px;font-size:5.85px;line-height:8px;color:#222;font-weight:bold">:hov</div>
 <div class="a nw mono" style="left:179.5px;top:16.5px;font-size:5.85px;line-height:8px;color:#222;font-weight:bold">.cls</div>
 <svg class="a" style="left:199px;top:15.5px" width="40" height="10" viewBox="0 0 40 10">
  <path d="M5 1.2V8.2M1.5 4.7H8.5" stroke="#333" stroke-width=".9"/><path d="M8 7.3L9.5 7.3L9.5 8.8Z" fill="#333"/>
  <path d="M16.2 1.2H21.8V5.2H19.6V8.6H18.4V5.2H16.2Z" fill="#333"/><rect x="17.1" y="2" width="3.8" height="1.6" fill="#fff"/>
  <rect x="28.5" y="1.2" width="6.6" height="6.8" fill="none" stroke="#333" stroke-width=".8"/><path d="M32.6 1.2V8M31.6 3.2L30 4.6L31.6 6Z" stroke="#333" stroke-width=".7" fill="#333"/>
 </svg>
 <div class="a mono nw" style="left:2.2px;top:29.6px;font-size:5.85px;line-height:8px;color:#9a9a9a">element.style {</div>
 <div class="a mono nw" style="left:2.2px;top:37.8px;font-size:5.85px;line-height:8px;color:#222">}</div>
 <div class="a" style="left:0;top:43.5px;width:243px;height:.7px;background:#e6e6e6"></div>
 <div class="a mono nw" style="left:2.2px;top:48px;font-size:5.85px;line-height:8px;color:#222">b</div>
 <div class="a mono nw" style="left:2.2px;top:64.4px;font-size:5.85px;line-height:8px;color:#222">}</div>
 <div class="a" style="left:0;top:72.5px;width:243px;height:.7px;background:#e6e6e6"></div>
 <div class="a mono nw" style="left:2.2px;top:75.5px;font-size:5.85px;line-height:8px;color:#222">b</div>
 <div class="a mono nw" style="left:2.2px;top:91.5px;font-size:5.85px;line-height:8px;color:#222">}</div>
 <div class="a" style="left:0;top:101.5px;width:243px;height:.7px;background:#e6e6e6"></div>
 <div class="a mono nw" style="right:2.5px;top:48px;font-size:5.85px;line-height:8px;color:#303030;text-decoration:underline;text-decoration-color:#999"><u style="text-decoration:none">f1n5.css:5</u></div>
 <div class="a mono nw" style="right:2.5px;top:76px;font-size:5.85px;line-height:8px;color:#303030;text-decoration:underline;text-decoration-color:#999"><u style="text-decoration:none">f1n5.css:5</u></div>
 <!-- body rule -->
 <div class="a mono nw" style="left:2.2px;top:103px;font-size:5.85px;line-height:8px;color:#222">body {</div>
 <div class="a mono nw" style="right:2.5px;top:103px;font-size:5.85px;line-height:8px;color:#303030;text-decoration:underline;text-decoration-color:#999"><u style="text-decoration:none">d5hNuvOvZu4…0f1n5.css:5</u></div>
 <div class="a mono nw" style="left:11.5px;top:112.1px;font-size:5.85px;line-height:7.35px;color:#222">
  <div><span class="pn">font-family</span>: 'Roboto',sans-serif;</div>
  <div><span class="pn">font-size</span>: 16px;</div>
  <div><span class="pn">line-height</span>: 1.42857143;</div>
  <div><span class="pn">color</span>: <span style="display:inline-block;width:5px;height:5px;background:#222;border:.5px solid #777;vertical-align:-.5px;margin:0 1.6px 0 1.8px"></span>#333;</div>
  <div><span class="pn">background-color</span>: <span style="display:inline-block;width:5px;height:5px;background:#fff;border:.5px solid #bbb;vertical-align:-.5px;margin:0 1.6px 0 1.8px"></span>#fff;</div>
 </div>
 <div class="a mono nw" style="left:2.2px;top:148.3px;font-size:5.85px;line-height:8px;color:#222">}</div>
 <div class="a" style="left:0;top:157px;width:243px;height:.7px;background:#e6e6e6"></div>
 <!-- body margin -->
 <div class="a mono nw" style="left:2.2px;top:160px;font-size:5.85px;line-height:8px;color:#222">body {</div>
 <div class="a mono nw" style="right:2.5px;top:160px;font-size:5.85px;line-height:8px;color:#303030;text-decoration:underline;text-decoration-color:#999"><u style="text-decoration:none">d5hNuvOvZu4…0f1n5.css:5</u></div>
 <div class="a mono nw" style="left:11.5px;top:169px;font-size:5.85px;line-height:8px;color:#222"><span class="pn">margin</span>: <span style="font-size:4.5px">▶</span> 0;</div>
 <div class="a mono nw" style="left:2.2px;top:176.5px;font-size:5.85px;line-height:8px;color:#222">}</div>
 <div class="a" style="left:0;top:185.5px;width:243px;height:.7px;background:#e6e6e6"></div>
 <div class="a mono nw" style="left:2.2px;top:187px;font-size:5.85px;line-height:8px;color:#222">* {</div>
 <div class="a mono nw" style="right:2.5px;top:187px;font-size:5.85px;line-height:8px;color:#303030;text-decoration:underline;text-decoration-color:#999"><u style="text-decoration:none">d5hNuvOvZu4…0f1n5.css:5</u></div>
 <div class="a mono nw" style="left:11.5px;top:195.8px;font-size:5.85px;line-height:7.6px;color:#222">
  <div style="text-decoration:line-through"><span class="pn">-webkit-box-sizing</span>: border-box;</div>
  <div style="color:#aaa"><span style="color:#bbb">-moz-box-sizing</span>: border-box;</div>
  <div><span class="pn">box-sizing</span>: border-box;</div>
 </div>
 <div class="a mono nw" style="left:2.2px;top:218.5px;font-size:5.85px;line-height:8px;color:#222">}</div>
 <div class="a" style="left:0;top:228px;width:243px;height:.7px;background:#e6e6e6"></div>
 <div class="a mono nw" style="left:2.2px;top:229.3px;font-size:5.85px;line-height:8px;color:#222;font-style:italic">body {</div>
 <div class="a mono nw" style="right:2.5px;top:229.3px;font-size:5.85px;line-height:8px;color:#555;font-style:italic">user agent stylesheet</div>
 <div class="a mono nw" style="left:11.5px;top:238px;font-size:5.85px;line-height:7.6px;color:#222;font-style:italic">
  <div><span class="pn">display</span>: block;</div>
  <div style="text-decoration:line-through"><span class="pn">margin</span>:→ 8px;</div>
 </div>
 <div class="a mono nw" style="left:2.2px;top:253px;font-size:5.85px;line-height:8px;color:#222;font-style:italic">}</div>
 <div class="a" style="left:0;top:262px;width:243px;height:20px;background:#eef2fb;border-top:.7px solid #e0e4ec"></div>
 <div class="a nw" style="left:1px;top:265.5px;font-size:6.2px;line-height:8px;color:#555">Inherited from <span class="mono" style="color:#881280">html#ng-app</span></div>
 <!-- tooltip -->
 <div class="a" style="left:5.5px;top:43.5px;width:200.5px;height:63px;background:#fff;border-radius:3px;box-shadow:0 .5px 2.5px rgba(0,0,0,.3)"></div>
 <div class="a" style="left:28.5px;top:103.5px;width:6px;height:6px;background:#fff;transform:rotate(45deg);box-shadow:1px 1px 1.5px rgba(0,0,0,.18)"></div>
 <div class="a" style="left:25px;top:99px;width:13px;height:5.5px;background:#fff"></div>
 <div class="a nw" style="left:13px;top:51.2px;font-size:6.45px;line-height:8.75px;color:#202124">Specifies a prioritized list of font family names or generic family<br>names. A user agent iterates through the list of family names until<br>it matches an available font that contains a glyph for the character<br>to be rendered.</div>
 <div class="a nw" style="left:13px;top:91.5px;font-size:6.3px;line-height:8px;color:#1f5ea8;text-decoration:underline">Learn more</div>
 <div class="a" style="left:157.7px;top:92.5px;width:6px;height:6px;border:.7px solid #555;border-radius:1px;background:#fff"></div>
 <div class="a nw" style="left:166px;top:91.5px;font-size:6.5px;line-height:8px;color:#202124">Don't show</div>
</div>
</div>
<div class="a" style="left:1016.5px;top:240px;width:7.5px;height:272px;background:#f3f3f3"></div><div class="a" style="left:1017.3px;top:263.3px;width:6.7px;height:204.5px;background:#c4c4c4"></div>
<div class="a" style="left:772.3px;top:238.3px;width:245.2px;height:160.5px;border:2.1px solid #ff00aa"></div>
<div class="a" style="left:281px;top:254px;width:400px;height:270px;border:5.5px solid #ff00aa;background:#fff;overflow:hidden"><div class="a" style="left:0;top:0;width:389px;height:260px;overflow:hidden"><div class="sp" style="transform:scale(1.615);transform-origin:0 0">
 <div class="a" style="left:0;top:0;width:243px;height:13.7px;background:#eef1f6"></div>
 <div class="a" style="left:0;top:12.5px;width:25.5px;height:1.3px;background:#2f6fc6"></div>
 <div class="a nw" style="left:3.9px;top:2.6px;font-size:6.2px;line-height:8px;color:#1f5ea8">Styles</div>
 <div class="a nw" style="left:30px;top:2.6px;font-size:6.2px;line-height:8px;color:#3c4043">Computed</div>
 <div class="a nw" style="left:70.7px;top:2.6px;font-size:6.2px;line-height:8px;color:#3c4043">Layout</div>
 <div class="a nw" style="left:100px;top:2.6px;font-size:6.2px;line-height:8px;color:#3c4043">Event Listeners</div>
 <div class="a nw" style="left:152.7px;top:2.6px;font-size:6.2px;line-height:8px;color:#3c4043">DOM Breakpoints</div>
 <svg class="a" style="left:210px;top:3px" width="8" height="7" viewBox="0 0 8 7"><path d="M1 1L3.3 3.5L1 6M4.3 1L6.6 3.5L4.3 6" fill="none" stroke="#444" stroke-width=".8"/></svg>
 <div class="a" style="left:0;top:13.7px;width:243px;height:14px;background:#fff;border-bottom:.7px solid #e4e4e4"></div>
 <div class="a" style="left:1px;top:16px;width:152px;height:8.4px;background:#fff;border:.7px solid #cfcfcf;border-radius:2.5px"></div>
 <div class="a nw" style="left:3.2px;top:16.2px;font-size:6px;line-height:8px;color:#777">Filter</div>
 <div class="a nw mono" style="left:160px;top:16.5px;font-size:5.85px;line-height:8px;color:#222;font-weight:bold">:hov</div>
 <div class="a nw mono" style="left:179.5px;top:16.5px;font-size:5.85px;line-height:8px;color:#222;font-weight:bold">.cls</div>
 <svg class="a" style="left:199px;top:15.5px" width="40" height="10" viewBox="0 0 40 10">
  <path d="M5 1.2V8.2M1.5 4.7H8.5" stroke="#333" stroke-width=".9"/><path d="M8 7.3L9.5 7.3L9.5 8.8Z" fill="#333"/>
  <path d="M16.2 1.2H21.8V5.2H19.6V8.6H18.4V5.2H16.2Z" fill="#333"/><rect x="17.1" y="2" width="3.8" height="1.6" fill="#fff"/>
  <rect x="28.5" y="1.2" width="6.6" height="6.8" fill="none" stroke="#333" stroke-width=".8"/><path d="M32.6 1.2V8M31.6 3.2L30 4.6L31.6 6Z" stroke="#333" stroke-width=".7" fill="#333"/>
 </svg>
 <div class="a mono nw" style="left:2.2px;top:29.6px;font-size:5.85px;line-height:8px;color:#9a9a9a">element.style {</div>
 <div class="a mono nw" style="left:2.2px;top:37.8px;font-size:5.85px;line-height:8px;color:#222">}</div>
 <div class="a" style="left:0;top:43.5px;width:243px;height:.7px;background:#e6e6e6"></div>
 <div class="a mono nw" style="left:2.2px;top:48px;font-size:5.85px;line-height:8px;color:#222">b</div>
 <div class="a mono nw" style="left:2.2px;top:64.4px;font-size:5.85px;line-height:8px;color:#222">}</div>
 <div class="a" style="left:0;top:72.5px;width:243px;height:.7px;background:#e6e6e6"></div>
 <div class="a mono nw" style="left:2.2px;top:75.5px;font-size:5.85px;line-height:8px;color:#222">b</div>
 <div class="a mono nw" style="left:2.2px;top:91.5px;font-size:5.85px;line-height:8px;color:#222">}</div>
 <div class="a" style="left:0;top:101.5px;width:243px;height:.7px;background:#e6e6e6"></div>
 <div class="a mono nw" style="right:2.5px;top:48px;font-size:5.85px;line-height:8px;color:#303030;text-decoration:underline;text-decoration-color:#999"><u style="text-decoration:none">f1n5.css:5</u></div>
 <div class="a mono nw" style="right:2.5px;top:76px;font-size:5.85px;line-height:8px;color:#303030;text-decoration:underline;text-decoration-color:#999"><u style="text-decoration:none">f1n5.css:5</u></div>
 <!-- body rule -->
 <div class="a mono nw" style="left:2.2px;top:103px;font-size:5.85px;line-height:8px;color:#222">body {</div>
 <div class="a mono nw" style="right:2.5px;top:103px;font-size:5.85px;line-height:8px;color:#303030;text-decoration:underline;text-decoration-color:#999"><u style="text-decoration:none">d5hNuvOvZu4…0f1n5.css:5</u></div>
 <div class="a mono nw" style="left:11.5px;top:112.1px;font-size:5.85px;line-height:7.35px;color:#222">
  <div><span class="pn">font-family</span>: 'Roboto',sans-serif;</div>
  <div><span class="pn">font-size</span>: 16px;</div>
  <div><span class="pn">line-height</span>: 1.42857143;</div>
  <div><span class="pn">color</span>: <span style="display:inline-block;width:5px;height:5px;background:#222;border:.5px solid #777;vertical-align:-.5px;margin:0 1.6px 0 1.8px"></span>#333;</div>
  <div><span class="pn">background-color</span>: <span style="display:inline-block;width:5px;height:5px;background:#fff;border:.5px solid #bbb;vertical-align:-.5px;margin:0 1.6px 0 1.8px"></span>#fff;</div>
 </div>
 <div class="a mono nw" style="left:2.2px;top:148.3px;font-size:5.85px;line-height:8px;color:#222">}</div>
 <div class="a" style="left:0;top:157px;width:243px;height:.7px;background:#e6e6e6"></div>
 <!-- body margin -->
 <div class="a mono nw" style="left:2.2px;top:160px;font-size:5.85px;line-height:8px;color:#222">body {</div>
 <div class="a mono nw" style="right:2.5px;top:160px;font-size:5.85px;line-height:8px;color:#303030;text-decoration:underline;text-decoration-color:#999"><u style="text-decoration:none">d5hNuvOvZu4…0f1n5.css:5</u></div>
 <div class="a mono nw" style="left:11.5px;top:169px;font-size:5.85px;line-height:8px;color:#222"><span class="pn">margin</span>: <span style="font-size:4.5px">▶</span> 0;</div>
 <div class="a mono nw" style="left:2.2px;top:176.5px;font-size:5.85px;line-height:8px;color:#222">}</div>
 <div class="a" style="left:0;top:185.5px;width:243px;height:.7px;background:#e6e6e6"></div>
 <div class="a mono nw" style="left:2.2px;top:187px;font-size:5.85px;line-height:8px;color:#222">* {</div>
 <div class="a mono nw" style="right:2.5px;top:187px;font-size:5.85px;line-height:8px;color:#303030;text-decoration:underline;text-decoration-color:#999"><u style="text-decoration:none">d5hNuvOvZu4…0f1n5.css:5</u></div>
 <div class="a mono nw" style="left:11.5px;top:195.8px;font-size:5.85px;line-height:7.6px;color:#222">
  <div style="text-decoration:line-through"><span class="pn">-webkit-box-sizing</span>: border-box;</div>
  <div style="color:#aaa"><span style="color:#bbb">-moz-box-sizing</span>: border-box;</div>
  <div><span class="pn">box-sizing</span>: border-box;</div>
 </div>
 <div class="a mono nw" style="left:2.2px;top:218.5px;font-size:5.85px;line-height:8px;color:#222">}</div>
 <div class="a" style="left:0;top:228px;width:243px;height:.7px;background:#e6e6e6"></div>
 <div class="a mono nw" style="left:2.2px;top:229.3px;font-size:5.85px;line-height:8px;color:#222;font-style:italic">body {</div>
 <div class="a mono nw" style="right:2.5px;top:229.3px;font-size:5.85px;line-height:8px;color:#555;font-style:italic">user agent stylesheet</div>
 <div class="a mono nw" style="left:11.5px;top:238px;font-size:5.85px;line-height:7.6px;color:#222;font-style:italic">
  <div><span class="pn">display</span>: block;</div>
  <div style="text-decoration:line-through"><span class="pn">margin</span>:→ 8px;</div>
 </div>
 <div class="a mono nw" style="left:2.2px;top:253px;font-size:5.85px;line-height:8px;color:#222;font-style:italic">}</div>
 <div class="a" style="left:0;top:262px;width:243px;height:20px;background:#eef2fb;border-top:.7px solid #e0e4ec"></div>
 <div class="a nw" style="left:1px;top:265.5px;font-size:6.2px;line-height:8px;color:#555">Inherited from <span class="mono" style="color:#881280">html#ng-app</span></div>
 <div class="a" style="left:9.2px;top:118.6px;width:119.3px;height:1.3px;background:#ff00aa"></div>
 <!-- tooltip -->
 <div class="a" style="left:5.5px;top:43.5px;width:200.5px;height:63px;background:#fff;border-radius:3px;box-shadow:0 .5px 2.5px rgba(0,0,0,.3)"></div>
 <div class="a" style="left:28.5px;top:103.5px;width:6px;height:6px;background:#fff;transform:rotate(45deg);box-shadow:1px 1px 1.5px rgba(0,0,0,.18)"></div>
 <div class="a" style="left:25px;top:99px;width:13px;height:5.5px;background:#fff"></div>
 <div class="a nw" style="left:13px;top:51.2px;font-size:6.45px;line-height:8.75px;color:#202124">Specifies a prioritized list of font family names or generic family<br>names. A user agent iterates through the list of family names until<br>it matches an available font that contains a glyph for the character<br>to be rendered.</div>
 <div class="a nw" style="left:13px;top:91.5px;font-size:6.3px;line-height:8px;color:#1f5ea8;text-decoration:underline">Learn more</div>
 <div class="a" style="left:157.7px;top:92.5px;width:6px;height:6px;border:.7px solid #555;border-radius:1px;background:#fff"></div>
 <div class="a nw" style="left:166px;top:91.5px;font-size:6.5px;line-height:8px;color:#202124">Don't show</div>
</div>
</div></div>
<svg class="a" style="left:0;top:0" width="1024" height="512"><path d="M680 354L773.5 331" stroke="#ff00aa" stroke-width="4.5"/></svg>
</body></html>
